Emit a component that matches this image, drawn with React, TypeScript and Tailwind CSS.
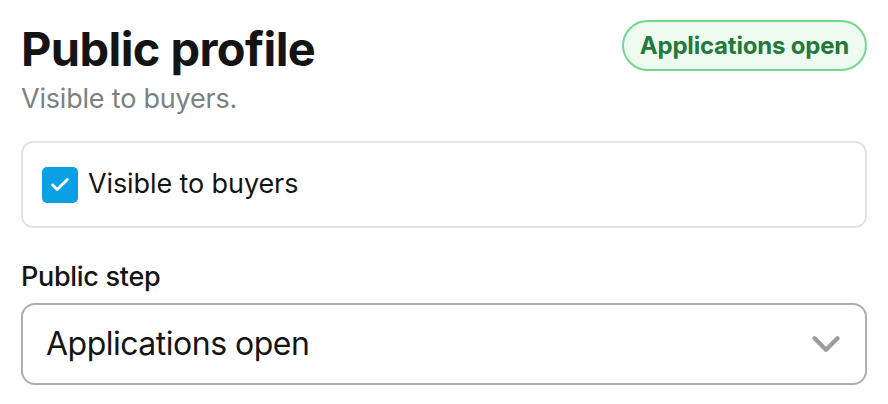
import React, { useState } from 'react';
import { ChevronDown, Check } from 'lucide-react';

const App: React.FC = () => {
  const [visible, setVisible] = useState(true);

  return (
    <div
      className="w-[888px] h-[404px] bg-white px-[21px] pt-[20px] text-[#141414]"
      style={{ fontFamily: 'Inter, "Noto Sans", sans-serif' }}
    >
      {/* Header */}
      <div className="flex items-start justify-between">
        <div>
          <h2 className="mt-[1px] text-[47px] leading-[56px] font-bold tracking-[-0.6px]">Public profile</h2>
          <p className="mt-[5px] text-[27px] leading-[34px] text-[#7b8082] tracking-[-0.2px]">Visible to buyers.</p>
        </div>
        <span className="h-[51px] px-[16px] flex items-center rounded-full border-2 border-[#72d88d] bg-[#edfaef] text-[24px] font-bold text-[#24783a] tracking-[-0.2px]">
          Applications open
        </span>
      </div>

      {/* Visibility card */}
      <div className="mt-[25px] h-[87px] rounded-[12px] border-2 border-[#e1e3e4] flex items-center px-[19px]">
        <button
          onClick={() => setVisible(!visible)}
          className={`w-[36px] h-[36px] rounded-[5px] flex items-center justify-center ${
            visible ? 'bg-[#0ba0e3]' : 'bg-white border-2 border-[#c0c4c6]'
          }`}
        >
          {visible && <Check className="w-[22px] h-[22px] text-white" strokeWidth={3.2} />}
        </button>
        <span className="ml-[10px] text-[27px] tracking-[-0.1px]">Visible to buyers</span>
      </div>

      {/* Public step */}
      <div className="mt-[32px]">
        <label className="block text-[27px] font-medium leading-[34px] tracking-[-0.3px]">Public step</label>
        <div className="mt-[9px] h-[82px] rounded-[14px] border-2 border-[#abafb2] flex items-center justify-between pl-[23px] pr-[16px]">
          <span className="text-[32px] tracking-[-0.5px]">Applications open</span>
          <ChevronDown className="w-[46px] h-[46px] text-[#9a9ea0]" strokeWidth={2.3} />
        </div>
      </div>
    </div>
  );
};

export default App;
